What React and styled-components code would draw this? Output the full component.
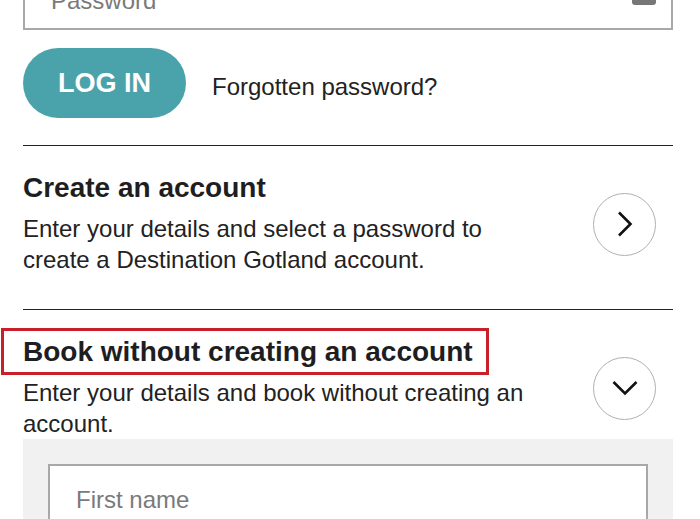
import styled, { createGlobalStyle } from "styled-components";

const GlobalStyle = createGlobalStyle`
    body {
        margin: 0;
        background: white;
        font-family: "Liberation Sans", Arial, sans-serif;
        color: #222;
        overflow: hidden;
    }
`;

export default function App() {
    return (
        <>
            <GlobalStyle />
            <Page>
                <Field $height={64} $textOffset={5}>
                    <Placeholder>Password</Placeholder>
                    <KeyIcon width="24" height="14" viewBox="0 0 24 14">
                        <rect x="0" y="0" width="24" height="14" rx="3" fill="#777" />
                    </KeyIcon>
                </Field>

                <LoginRow>
                    <LoginButton>LOG IN</LoginButton>
                    <ForgotLink>Forgotten password?</ForgotLink>
                </LoginRow>

                <Section>
                    <SectionText>
                        <Title>Create an account</Title>
                        <Description>
                            Enter your details and select a password to
                            <br />
                            create a Destination Gotland account.
                        </Description>
                    </SectionText>
                    <CircleButton>
                        <svg width="16" height="26" viewBox="0 0 16 26">
                            <path d="M2 1.5 L13.5 13 L2 24.5" fill="none" stroke="#111" strokeWidth="2.6" />
                        </svg>
                    </CircleButton>
                </Section>

                <Section $last>
                    <SectionText>
                        <Title $highlight>Book without creating an account</Title>
                        <Description>
                            Enter your details and book without creating an
                            <br />
                            account.
                        </Description>
                    </SectionText>
                    <CircleButton>
                        <svg width="26" height="16" viewBox="0 0 26 16">
                            <path d="M1.5 2 L13 13.5 L24.5 2" fill="none" stroke="#111" strokeWidth="2.6" />
                        </svg>
                    </CircleButton>
                </Section>

                <GuestPanel>
                    <Field $height={72}>
                        <Placeholder>First name</Placeholder>
                    </Field>
                </GuestPanel>
            </Page>
        </>
    );
}

const Page = styled.div`
    margin-top: -34px;
    padding: 0 27px 0 23px;

    display: flex;
    flex-direction: column;
`;

const Field = styled.div`
    position: relative;
    height: ${(p) => p.$height}px;
    box-sizing: border-box;

    border: 2px solid #a8a8a8;
    background: white;

    display: flex;
    align-items: center;
    padding-left: 26px;
    padding-top: ${(p) => p.$textOffset || 0}px;
`;

const Placeholder = styled.span`
    font-size: 24px;
    color: #7a7a7a;
`;

const KeyIcon = styled.svg`
    position: absolute;
    right: 15px;
    top: 23px;
`;

const LoginRow = styled.div`
    margin-top: 18px;

    display: flex;
    align-items: center;
    gap: 26px;
`;

const LoginButton = styled.div`
    width: 163px;
    height: 70px;

    border-radius: 35px;
    background-color: #4aa3ab;

    display: flex;
    align-items: center;
    justify-content: center;

    color: white;
    font-size: 27px;
    font-weight: bold;
`;

const ForgotLink = styled.span`
    font-size: 24px;
    color: #222;
    padding-top: 8px;
`;

const Section = styled.div`
    margin-top: ${(p) => (p.$last ? "0" : "27px")};
    border-top: 1.5px solid #222;
    padding-top: 25px;
    padding-bottom: ${(p) => (p.$last ? "0" : "34px")};

    display: flex;
    align-items: center;
    justify-content: space-between;
`;

const SectionText = styled.div`
    display: flex;
    flex-direction: column;
    align-items: flex-start;
`;

const Title = styled.h3`
    margin: 0;
    font-size: 28px;
    line-height: 34px;
    font-weight: bold;
    color: #1e1e22;

    ${(p) =>
        p.$highlight &&
        `
        margin: -7px 0 -6px -22px;
        padding: 4px 13px 3px 19px;
        border: 3px solid #c8202a;
    `}
`;

const Description = styled.p`
    margin: 8px 0 0 0;
    font-size: 24px;
    line-height: 31px;
    color: #222;
`;

const CircleButton = styled.div`
    width: 63px;
    height: 63px;
    box-sizing: border-box;
    margin-top: 2px;
    margin-right: 17px;
    flex-shrink: 0;

    border-radius: 50%;
    border: 1.5px solid #b0b0b0;

    display: flex;
    align-items: center;
    justify-content: center;
`;

const GuestPanel = styled.div`
    background-color: #f1f1f1;
    padding: 25px 25px 0 25px;
    height: 100px;
`;
